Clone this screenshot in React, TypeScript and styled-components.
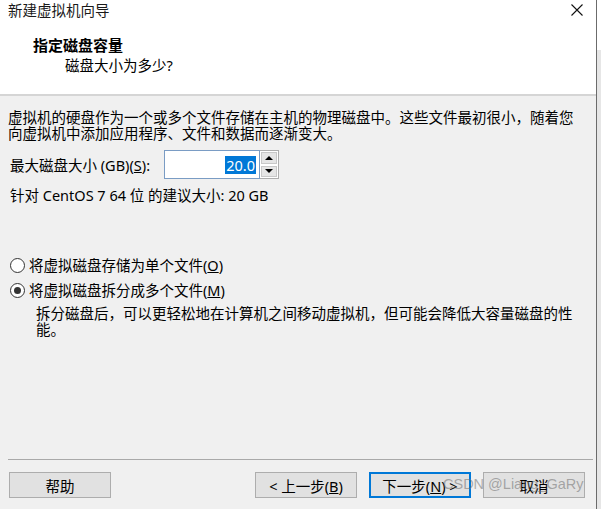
import React from 'react';
import styled, { createGlobalStyle } from 'styled-components';

const GlobalStyle = createGlobalStyle`
  html, body {
    margin: 0;
    padding: 0;
    background: #ffffff;
  }
  body {
    font-family: "Noto Sans", "Noto Sans CJK SC", sans-serif;
    color: #000000;
  }
`;

const FONT = `"Noto Sans", "Noto Sans CJK SC", sans-serif`;

const Screen = styled.div`
  display: flex;
  width: 601px;
  height: 509px;
  overflow: hidden;
`;

const Dialog = styled.div`
  display: flex;
  flex-direction: column;
  width: 596px;
  height: 509px;
  border-right: 1px solid #6b6b6b;
  background: #f0f0f0;
  font: 14.5px ${FONT};
`;

const BehindWindow = styled.div`
  flex: 1;
  background: linear-gradient(to bottom, #ffffff 0, #ffffff 50px, #e6e6e6 50px);
`;

const Header = styled.header`
  display: flex;
  flex-direction: column;
  height: 94px;
  background: #ffffff;
  border-bottom: 2px solid #d5d5d5;
`;

const TitleBar = styled.div`
  display: flex;
  align-items: center;
  justify-content: space-between;
  height: 20px;
  padding: 0 13px 0 8px;
`;

const TitleText = styled.span`
  font-size: 14.5px;
  line-height: 18px;
  color: #1a1a1a;
`;

const CloseIcon = styled.svg`
  width: 12px;
  height: 12px;
`;

const PageTitle = styled.h1`
  margin: 16px 0 0 33px;
  font: bold 15px ${FONT};
  line-height: 18px;
`;

const PageSubtitle = styled.p`
  margin: 3px 0 0 65px;
  font-size: 14.5px;
  line-height: 17px;
`;

const Body = styled.main`
  flex: 1;
  display: flex;
  flex-direction: column;
  padding: 0 8px;
`;

const Paragraph = styled.p<{ indent?: number; top?: number }>`
  margin: ${({ top }) => top ?? 0}px 0 0 ${({ indent }) => indent ?? 0}px;
  line-height: 16px;
`;

const SizeRow = styled.div`
  display: flex;
  align-items: center;
  margin: 9px 0 0 2px;
  height: 29px;
`;

const Label = styled.span`
  width: 154px;
  line-height: 16px;
`;

const Key = styled.span`
  text-decoration: underline;
`;

const NumberInput = styled.div`
  display: flex;
  align-items: center;
  justify-content: flex-end;
  box-sizing: border-box;
  width: 96px;
  height: 29px;
  padding-right: 3px;
  background: #ffffff;
  border: 1px solid #7a9cc4;
`;

const Selected = styled.span`
  background: #0078d7;
  color: #ffffff;
  line-height: 18px;
  padding: 0 1px;
`;

const Spinner = styled.div`
  display: flex;
  flex-direction: column;
  box-sizing: border-box;
  width: 19px;
  height: 29px;
  border: 1px solid #adadad;
  border-left: none;
  background: #ffffff;
`;

const SpinButton = styled.div`
  flex: 1;
  display: flex;
  align-items: center;
  justify-content: center;
  margin: 1px;
  background: #e5e5e5;
  border: 1px solid #c8c8c8;
`;

const Arrow = styled.span<{ down?: boolean }>`
  width: 0;
  height: 0;
  border-left: 4px solid transparent;
  border-right: 4px solid transparent;
  ${({ down }) => (down ? 'border-top: 4px solid #000;' : 'border-bottom: 4px solid #000;')}
`;

const Options = styled.div`
  display: flex;
  flex-direction: column;
  gap: 9px;
  margin-top: 54px;
`;

const RadioRow = styled.label`
  display: flex;
  align-items: center;
  gap: 4px;
  margin-left: 2px;
  line-height: 16px;
`;

const RadioCircle = styled.span<{ checked?: boolean }>`
  box-sizing: border-box;
  display: flex;
  align-items: center;
  justify-content: center;
  width: 15px;
  height: 15px;
  border: 1px solid #333333;
  border-radius: 50%;
  background: #ffffff;

  &::after {
    content: '';
    display: ${({ checked }) => (checked ? 'block' : 'none')};
    width: 7px;
    height: 7px;
    border-radius: 50%;
    background: #333333;
  }
`;

const Footer = styled.footer`
  position: relative;
  display: flex;
  align-items: center;
  gap: 12px;
  margin: 0 3px 0 8px;
  padding: 12px 0 11px 1px;
  border-top: 1px solid #a9a9a9;
`;

const Button = styled.button<{ primary?: boolean; farGap?: boolean }>`
  box-sizing: border-box;
  width: 102px;
  height: 26px;
  margin-right: ${({ farGap }) => (farGap ? 132 : 0)}px;
  background: #e1e1e1;
  border: ${({ primary }) => (primary ? '2px solid #0078d7' : '1px solid #adadad')};
  font: 14.5px ${FONT};
  color: #000000;
  padding: 0;
  white-space: nowrap;
`;

const Watermark = styled.span`
  position: absolute;
  left: 435px;
  top: 16px;
  font: 14.5px "Liberation Sans", Arial, sans-serif;
  color: rgba(110, 110, 110, 0.55);
  white-space: nowrap;
  pointer-events: none;
`;

export default function App() {
  return (
    <>
      <GlobalStyle />
      <Screen>
        <Dialog>
          <Header>
            <TitleBar>
              <TitleText>新建虚拟机向导</TitleText>
              <CloseIcon viewBox="0 0 12 12">
                <path d="M0.5 0.5 L11.5 11.5 M11.5 0.5 L0.5 11.5" stroke="#111" strokeWidth="1.1" fill="none" />
              </CloseIcon>
            </TitleBar>
            <PageTitle>指定磁盘容量</PageTitle>
            <PageSubtitle>磁盘大小为多少?</PageSubtitle>
          </Header>
          <Body>
            <Paragraph top={13}>
              虚拟机的硬盘作为一个或多个文件存储在主机的物理磁盘中。这些文件最初很小，随着您
              <br />
              向虚拟机中添加应用程序、文件和数据而逐渐变大。
            </Paragraph>
            <SizeRow>
              <Label>
                最大磁盘大小 (GB)(<Key>S</Key>):
              </Label>
              <NumberInput>
                <Selected>20.0</Selected>
              </NumberInput>
              <Spinner>
                <SpinButton>
                  <Arrow />
                </SpinButton>
                <SpinButton>
                  <Arrow down />
                </SpinButton>
              </Spinner>
            </SizeRow>
            <Paragraph top={8} indent={2}>
              针对 CentOS 7 64 位 的建议大小: 20 GB
            </Paragraph>
            <Options>
              <RadioRow>
                <RadioCircle />
                <span>
                  将虚拟磁盘存储为单个文件(<Key>O</Key>)
                </span>
              </RadioRow>
              <RadioRow>
                <RadioCircle checked />
                <span>
                  将虚拟磁盘拆分成多个文件(<Key>M</Key>)
                </span>
              </RadioRow>
            </Options>
            <Paragraph top={7} indent={28}>
              拆分磁盘后，可以更轻松地在计算机之间移动虚拟机，但可能会降低大容量磁盘的性
              <br />
              能。
            </Paragraph>
          </Body>
          <Footer>
            <Button farGap>帮助</Button>
            <Button>
              &lt; 上一步(<Key>B</Key>)
            </Button>
            <Button primary>
              下一步(<Key>N</Key>) &gt;
            </Button>
            <Button>取消</Button>
            <Watermark>CSDN @Liang_GaRy</Watermark>
          </Footer>
        </Dialog>
        <BehindWindow />
      </Screen>
    </>
  );
}
